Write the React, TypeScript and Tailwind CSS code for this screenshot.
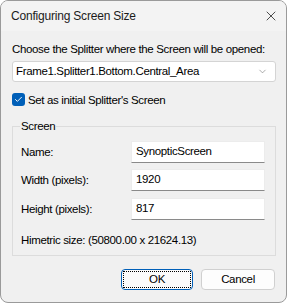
import { ChevronDown, X, Check } from "lucide-react";

const font = { fontFamily: '"Liberation Sans", Arial, sans-serif', letterSpacing: "-0.35px" };

function Field({ label, value, top }: { label: string; value: string; top: string }) {
  return (
    <div className={`flex items-center ${top}`}>
      <div className="w-[111px] pl-[1px] text-[11.5px] leading-4 text-black">{label}</div>
      <div className="flex h-[22px] w-[134px] items-center border border-[#ececec] border-b-[#8a8a8a] bg-white pl-[4px] text-[11.5px] text-black">
        {value}
      </div>
    </div>
  );
}

export default function App() {
  return (
    <div className="h-[303px] w-[287px] bg-white" style={font}>
      <div className="flex h-[303px] w-[287px] flex-col overflow-hidden rounded-[8px] border border-[#9a9a9a] bg-[#f0f0f0]">
        <div className="flex h-[30px] items-center justify-between bg-[#f3f3f3] pl-[10px] pr-[7px]">
          <span className="text-[12px] tracking-[-0.2px] text-[#1b1b1b]">Configuring Screen Size</span>
          <X className="h-[16px] w-[16px] text-[#222]" strokeWidth={1.2} />
        </div>
        <div className="flex flex-col px-[11px]">
          <div className="mt-[10px] h-4 whitespace-nowrap text-[11.5px] leading-4 text-black">
            Choose the Splitter where the Screen will be opened:
          </div>
          <div className="mt-[4px] flex h-[21px] w-[264px] items-center justify-between rounded-[3px] border border-[#d4d4d4] bg-white pl-[3px] pr-[7px] text-[11.5px] text-black">
            <span>Frame1.Splitter1.Bottom.Central_Area</span>
            <ChevronDown className="h-[11px] w-[11px] text-[#666]" strokeWidth={1.2} />
          </div>
          <div className="mt-[11px] flex h-[13px] items-center gap-[3px]">
            <div className="flex h-[13px] w-[13px] items-center justify-center rounded-[3px] bg-[#005fb8]">
              <Check className="h-[9px] w-[9px] text-white" strokeWidth={2.5} />
            </div>
            <span className="text-[11.5px] leading-4 text-black">Set as initial Splitter's Screen</span>
          </div>
          <fieldset className="mt-[12px] w-[264px] border border-[#dcdcdc] pb-[7px] pl-[7px]">
            <legend className="px-[1px] text-[11.5px] leading-4 text-black">Screen</legend>
            <Field label="Name:" value="SynopticScreen" top="mt-[7px]" />
            <Field label="Width (pixels):" value="1920" top="mt-[6px]" />
            <Field label="Height (pixels):" value="817" top="mt-[7px]" />
            <div className="mt-[12px] pl-[1px] text-[11.5px] leading-4 text-black">
              Himetric size: (50800.00 x 21624.13)
            </div>
          </fieldset>
          <div className="mt-[13px] flex justify-end gap-[8px]">
            <div className="flex h-[21px] w-[72px] items-center justify-center rounded-[4px] border border-[#005fb8] bg-[#fbfbfb] p-[1px]">
              <div className="flex h-full w-full items-center justify-center border border-dotted border-black text-[11.5px] text-black">
                OK
              </div>
            </div>
            <div className="flex h-[21px] w-[74px] items-center justify-center rounded-[4px] border border-[#d0d0d0] bg-[#fdfdfd] text-[11.5px] text-black">
              Cancel
            </div>
          </div>
        </div>
      </div>
    </div>
  );
}
